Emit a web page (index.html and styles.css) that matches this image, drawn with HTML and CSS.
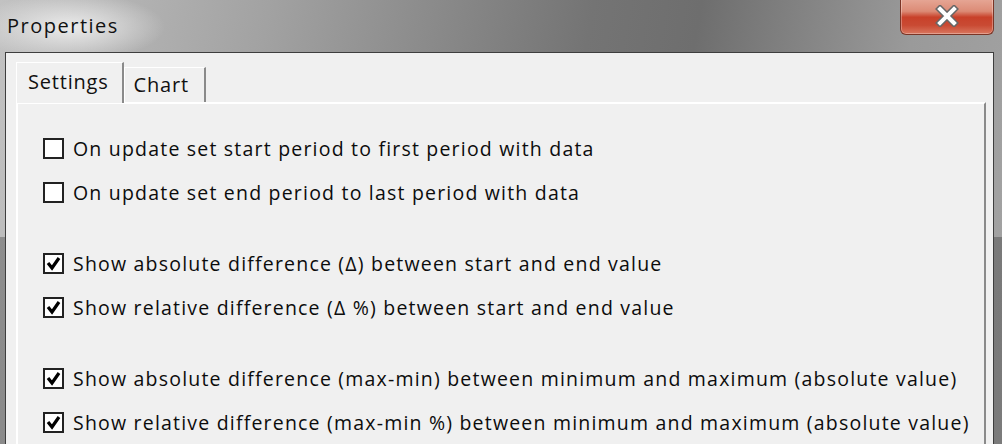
FILE: index.html
```html
<!DOCTYPE html>
<html lang="en">
<head>
  <meta charset="UTF-8" />
  <title>Properties</title>
  <link rel="stylesheet" href="styles.css">
</head>
<body>
  <div class="janela">
    <div class="barra-titulo">
      <span class="titulo">Properties</span>
      <button class="fechar" title="Close">
        <svg width="26" height="22" viewBox="0 0 26 22">
          <path d="M6 4 L20 18 M20 4 L6 18" stroke="#666" stroke-width="7" stroke-linecap="square" fill="none"/>
          <path d="M6 4 L20 18 M20 4 L6 18" stroke="#fff" stroke-width="4" stroke-linecap="square" fill="none"/>
        </svg>
      </button>
    </div>
    <div class="cliente">
      <div class="abas">
        <div class="aba ativa">Settings</div>
        <div class="aba">Chart</div>
      </div>
      <div class="painel">
        <div class="grupo">
          <label class="opcao"><span class="caixa"></span>On update set start period to first period with data</label>
          <label class="opcao"><span class="caixa"></span>On update set end period to last period with data</label>
        </div>
        <div class="grupo">
          <label class="opcao"><span class="caixa"><svg viewBox="0 0 17 17"><path d="M3 8 L7 13 L14 3" stroke="#000" stroke-width="3.2" fill="none"/></svg></span>Show absolute difference (&Delta;) between start and end value</label>
          <label class="opcao"><span class="caixa"><svg viewBox="0 0 17 17"><path d="M3 8 L7 13 L14 3" stroke="#000" stroke-width="3.2" fill="none"/></svg></span>Show relative difference (&Delta; %) between start and end value</label>
        </div>
        <div class="grupo">
          <label class="opcao"><span class="caixa"><svg viewBox="0 0 17 17"><path d="M3 8 L7 13 L14 3" stroke="#000" stroke-width="3.2" fill="none"/></svg></span>Show absolute difference (max-min) between minimum and maximum (absolute value)</label>
          <label class="opcao"><span class="caixa"><svg viewBox="0 0 17 17"><path d="M3 8 L7 13 L14 3" stroke="#000" stroke-width="3.2" fill="none"/></svg></span>Show relative difference (max-min %) between minimum and maximum (absolute value)</label>
        </div>
      </div>
    </div>
  </div>
</body>
</html>
```

FILE: styles.css
```css
body {
  margin: 0;
  width: 1002px;
  height: 444px;
  overflow: hidden;
  font-family: "Open Sans", "Noto Sans", sans-serif;
}
.janela {
  height: 444px;
  display: flex;
  flex-direction: column;
  padding: 0 8px 0 5px;
  background:
    radial-gradient(ellipse 95px 34px at 70px 27px, rgba(238, 238, 238, 0.95), rgba(238, 238, 238, 0) 100%),
    linear-gradient(180deg, rgba(0, 0, 0, 0) 0, rgba(0, 0, 0, 0) 237px, rgba(0, 0, 0, 0.25) 237px),
    linear-gradient(100deg, #c2c2c2 0%, #a2a2a2 25%, #747474 55%, #6e6e6e 65%, #9a9a9a 85%, #a4a4a4 100%);
}
.barra-titulo {
  height: 53px;
  display: flex;
  justify-content: space-between;
  align-items: flex-start;
}
.titulo {
  font-size: 20px;
  letter-spacing: 1.5px;
  color: #111;
  margin: 12px 0 0 2px;
}
.fechar {
  width: 94px;
  height: 36px;
  margin-top: -1px;
  border: 1px solid #7a3526;
  border-top: none;
  border-radius: 0 0 6px 6px;
  background: linear-gradient(180deg, #e6a796 0%, #dc8b76 35%, #c8412a 52%, #c94a33 75%, #d9775f 100%);
  box-shadow: inset 0 0 0 1px rgba(255, 255, 255, 0.3);
  display: flex;
  justify-content: center;
  align-items: center;
  padding: 0 0 2px 0;
}
.cliente {
  flex: 1;
  background: #f0f0f0;
  border: 1px solid #3e3e3e;
  border-bottom: none;
  padding: 9px 7px 0 10px;
  display: flex;
  flex-direction: column;
}
.abas {
  display: flex;
  align-items: flex-end;
  height: 40px;
}
.aba {
  font-size: 20px;
  letter-spacing: 0.8px;
  color: #111;
  background: #f0f0f0;
  border-left: 1px solid #fff;
  border-top: 1px solid #fff;
  border-right: 2px solid #8a8a8a;
  height: 34px;
  padding: 0 15px 0 9px;
  line-height: 34px;
}
.aba.ativa {
  height: 40px;
  line-height: 38px;
  padding: 0 13px 0 11px;
  margin-bottom: -1px;
  position: relative;
  z-index: 1;
}
.painel {
  flex: 1;
  border-left: 2px solid #fff;
  border-top: 2px solid #fff;
  border-right: 2px solid #8a8a8a;
  padding: 22px 0 0 25px;
  display: flex;
  flex-direction: column;
  gap: 27px;
}
.grupo {
  display: flex;
  flex-direction: column;
}
.opcao {
  display: flex;
  align-items: center;
  height: 44px;
  font-size: 19.5px;
  letter-spacing: 1.2px;
  color: #0c0c0c;
  white-space: nowrap;
}
.caixa {
  width: 17px;
  height: 17px;
  border: 2px solid #222;
  background: #fff;
  margin-right: 9px;
  flex: none;
  display: flex;
}
.caixa svg {
  width: 17px;
  height: 17px;
}
```
